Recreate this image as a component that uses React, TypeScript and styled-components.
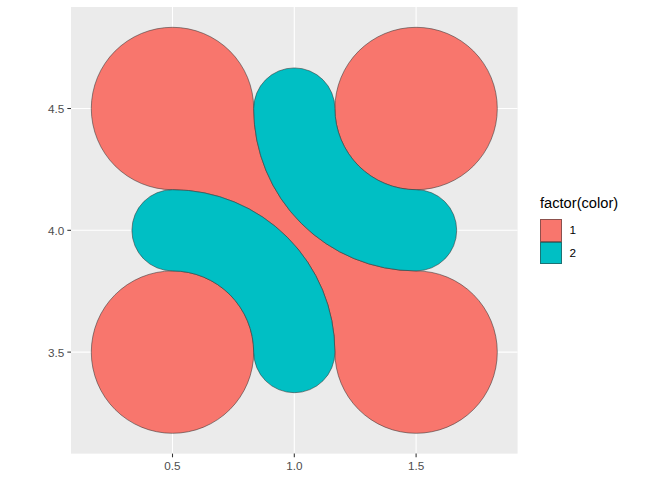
import styled, { createGlobalStyle } from "styled-components";

const GlobalStyle = createGlobalStyle`
    html, body {
        margin: 0;
        padding: 0;
        background: #fff;
    }
    body {
        font-family: "Liberation Sans", Arial, sans-serif;
    }
`;

const Page = styled.div`
    display: flex;
    align-items: flex-start;
    width: 672px;
    height: 480px;
    background: #fff;
    overflow: hidden;
`;

const PlotSvg = styled.svg`
    display: block;
    flex: none;
    width: 530px;
    height: 480px;
`;

const Legend = styled.div`
    display: flex;
    flex-direction: column;
    margin-left: 10px;
    padding-top: 195.4px;
`;

const LegendTitle = styled.div`
    font-size: 14.67px;
    line-height: 17px;
    color: #000;
    margin-bottom: 6.6px;
    white-space: nowrap;
`;

const KeyRow = styled.div`
    display: flex;
    align-items: center;
    gap: 7.1px;
`;

const KeySwatch = styled.div<{ $fill: string }>`
    width: 22.4px;
    height: 22.7px;
    box-sizing: border-box;
    background: ${(p) => p.$fill};
    border: 1px solid rgba(51, 51, 51, 0.55);
`;

const KeyLabel = styled.span`
    font-size: 11.73px;
    line-height: 14px;
    color: #000;
    margin-top: -1px;
`;

// data -> pixel
const SCALE = 243.6;
const X = (x: number) => 71 + (x - 1 / 12) * SCALE;
const Y = (y: number) => 7 + (4.9167 - y) * SCALE;

const R = SCALE / 3;
const R2 = (SCALE * 2) / 3;
const RC = SCALE / 6;

const RED = "#F8766D";
const TEAL = "#00BFC4";
const EDGE = "#333333";

const f = (n: number) => n.toFixed(2);

const tl = { x: X(0.5), y: Y(4.5) };
const tr = { x: X(1.5), y: Y(4.5) };
const bl = { x: X(0.5), y: Y(3.5) };
const br = { x: X(1.5), y: Y(3.5) };

const redBody = [
    `M${f(tl.x + R)},${f(tl.y)}`,
    `A${f(R)},${f(R)} 0 1 0 ${f(tl.x)},${f(tl.y + R)}`,
    `A${f(R2)},${f(R2)} 0 0 1 ${f(bl.x + R2)},${f(bl.y)}`,
    `A${f(R)},${f(R)} 0 1 0 ${f(br.x)},${f(br.y - R)}`,
    `A${f(R2)},${f(R2)} 0 0 1 ${f(tr.x - R2)},${f(tr.y)}`,
    "Z",
].join(" ");

const tealTop = [
    `M${f(tr.x - R2)},${f(tr.y)}`,
    `A${f(RC)},${f(RC)} 0 0 1 ${f(tr.x - R)},${f(tr.y)}`,
    `A${f(R)},${f(R)} 0 0 0 ${f(tr.x)},${f(tr.y + R)}`,
    `A${f(RC)},${f(RC)} 0 0 1 ${f(tr.x)},${f(tr.y + R2)}`,
    `A${f(R2)},${f(R2)} 0 0 1 ${f(tr.x - R2)},${f(tr.y)}`,
    "Z",
].join(" ");

const tealBottom = [
    `M${f(bl.x)},${f(bl.y - R2)}`,
    `A${f(RC)},${f(RC)} 0 0 0 ${f(bl.x)},${f(bl.y - R)}`,
    `A${f(R)},${f(R)} 0 0 1 ${f(bl.x + R)},${f(bl.y)}`,
    `A${f(RC)},${f(RC)} 0 0 0 ${f(bl.x + R2)},${f(bl.y)}`,
    `A${f(R2)},${f(R2)} 0 0 0 ${f(bl.x)},${f(bl.y - R2)}`,
    "Z",
].join(" ");

const xBreaks = [
    { v: 0.5, label: "0.5" },
    { v: 1.0, label: "1.0" },
    { v: 1.5, label: "1.5" },
];
const yBreaks = [
    { v: 3.5, label: "3.5" },
    { v: 4.0, label: "4.0" },
    { v: 4.5, label: "4.5" },
];

const PANEL = { x0: 71, y0: 7, x1: X(1.9167), y1: Y(3.0833) };
const TICK = 3.67;

const Chart = () => (
    <PlotSvg viewBox="0 0 530 480">
        <rect
            x={PANEL.x0}
            y={PANEL.y0}
            width={PANEL.x1 - PANEL.x0}
            height={PANEL.y1 - PANEL.y0}
            fill="#EBEBEB"
        />
        {xBreaks.map((b) => (
            <line key={"gx" + b.label} x1={X(b.v)} x2={X(b.v)} y1={PANEL.y0} y2={PANEL.y1} stroke="#fff" strokeWidth={1.07} />
        ))}
        {yBreaks.map((b) => (
            <line key={"gy" + b.label} x1={PANEL.x0} x2={PANEL.x1} y1={Y(b.v)} y2={Y(b.v)} stroke="#fff" strokeWidth={1.07} />
        ))}

        <g stroke={EDGE} strokeWidth={0.55}>
            <path d={redBody} fill={RED} />
            <circle cx={tr.x} cy={tr.y} r={R} fill={RED} />
            <circle cx={bl.x} cy={bl.y} r={R} fill={RED} />
            <path d={tealTop} fill={TEAL} />
            <path d={tealBottom} fill={TEAL} />
        </g>

        {/* axes */}
        {xBreaks.map((b) => (
            <g key={"ax" + b.label}>
                <line x1={X(b.v)} x2={X(b.v)} y1={PANEL.y1} y2={PANEL.y1 + TICK} stroke="#333" strokeWidth={1.07} />
                <text
                    x={X(b.v)}
                    y={470}
                    textAnchor="middle"
                    fontFamily="'Liberation Sans', Arial, sans-serif"
                    fontSize={11.73}
                    fill="#4D4D4D"
                >
                    {b.label}
                </text>
            </g>
        ))}
        {yBreaks.map((b) => (
            <g key={"ay" + b.label}>
                <line x1={PANEL.x0 - TICK} x2={PANEL.x0} y1={Y(b.v)} y2={Y(b.v)} stroke="#333" strokeWidth={1.07} />
                <text
                    x={PANEL.x0 - TICK - 2.93}
                    y={Y(b.v) + 4.6}
                    textAnchor="end"
                    fontFamily="'Liberation Sans', Arial, sans-serif"
                    fontSize={11.73}
                    fill="#4D4D4D"
                >
                    {b.label}
                </text>
            </g>
        ))}
    </PlotSvg>
);

const legendItems = [
    { label: "1", fill: RED },
    { label: "2", fill: TEAL },
];

export default function App() {
    return (
        <Page>
            <GlobalStyle />
            <Chart />
            <Legend>
                <LegendTitle>factor(color)</LegendTitle>
                {legendItems.map((item) => (
                    <KeyRow key={item.label}>
                        <KeySwatch $fill={item.fill} />
                        <KeyLabel>{item.label}</KeyLabel>
                    </KeyRow>
                ))}
            </Legend>
        </Page>
    );
}
